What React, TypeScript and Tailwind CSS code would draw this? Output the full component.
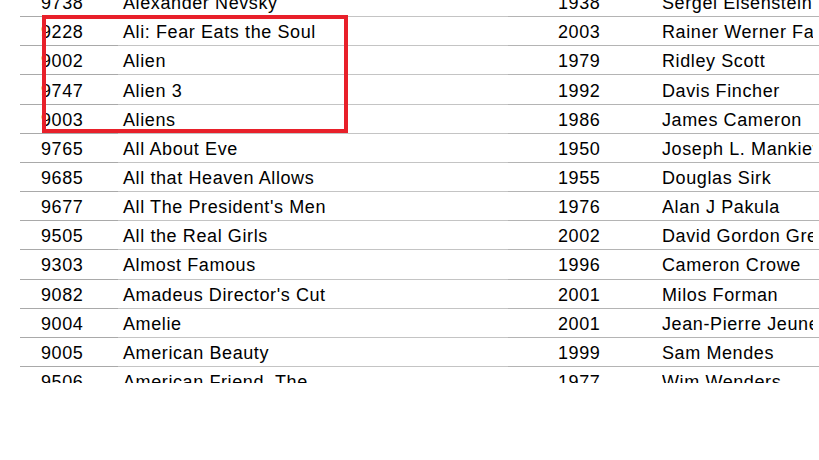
const movies = [
  { id: "9738", title: "Alexander Nevsky", year: "1938", director: "Sergei Eisenstein" },
  { id: "9228", title: "Ali: Fear Eats the Soul", year: "2003", director: "Rainer Werner Fassbinder" },
  { id: "9002", title: "Alien", year: "1979", director: "Ridley Scott" },
  { id: "9747", title: "Alien 3", year: "1992", director: "Davis Fincher" },
  { id: "9003", title: "Aliens", year: "1986", director: "James Cameron" },
  { id: "9765", title: "All About Eve", year: "1950", director: "Joseph L. Mankiewicz" },
  { id: "9685", title: "All that Heaven Allows", year: "1955", director: "Douglas Sirk" },
  { id: "9677", title: "All The President's Men", year: "1976", director: "Alan J Pakula" },
  { id: "9505", title: "All the Real Girls", year: "2002", director: "David Gordon Green" },
  { id: "9303", title: "Almost Famous", year: "1996", director: "Cameron Crowe" },
  { id: "9082", title: "Amadeus Director's Cut", year: "2001", director: "Milos Forman" },
  { id: "9004", title: "Amelie", year: "2001", director: "Jean-Pierre Jeunet" },
  { id: "9005", title: "American Beauty", year: "1999", director: "Sam Mendes" },
  { id: "9506", title: "American Friend, The", year: "1977", director: "Wim Wenders" },
];

function MovieRow({ id, title, year, director }: (typeof movies)[number]) {
  return (
    <div className="flex h-[29.17px] items-center whitespace-nowrap">
      <div className="flex h-full w-[98px] items-center border-b border-[#a9a9a9] pl-[21px] pt-[3px]">
        {id}
      </div>
      <div className="flex h-full w-[390px] items-center border-b border-[#c4c4c4] pl-[5px] pt-[3px]">
        {title}
      </div>
      <div className="flex h-full w-[122px] items-center border-b border-[#b4b4b4] pl-[50px] pt-[3px]">
        {year}
      </div>
      <div className="flex h-full w-[189px] items-center border-b border-[#b4b4b4] pl-[32px] pr-[6px] pt-[3px]">
        <span className="block min-w-0 overflow-hidden">{director}</span>
      </div>
    </div>
  );
}

export default function App() {
  return (
    <div className="relative h-[460px] w-[819px] overflow-hidden bg-white text-[18px] tracking-[0.6px] text-black [font-family:'Liberation_Sans',Arial,sans-serif]">
      <div className="h-[383px] overflow-hidden pl-[20px]">
        <div className="mt-[-12px]">
          {movies.map((m) => (
            <MovieRow key={m.id} {...m} />
          ))}
        </div>
      </div>
      <div className="absolute left-[42px] top-[15px] h-[118px] w-[306px] border-4 border-[#e8202a]" />
    </div>
  );
}
